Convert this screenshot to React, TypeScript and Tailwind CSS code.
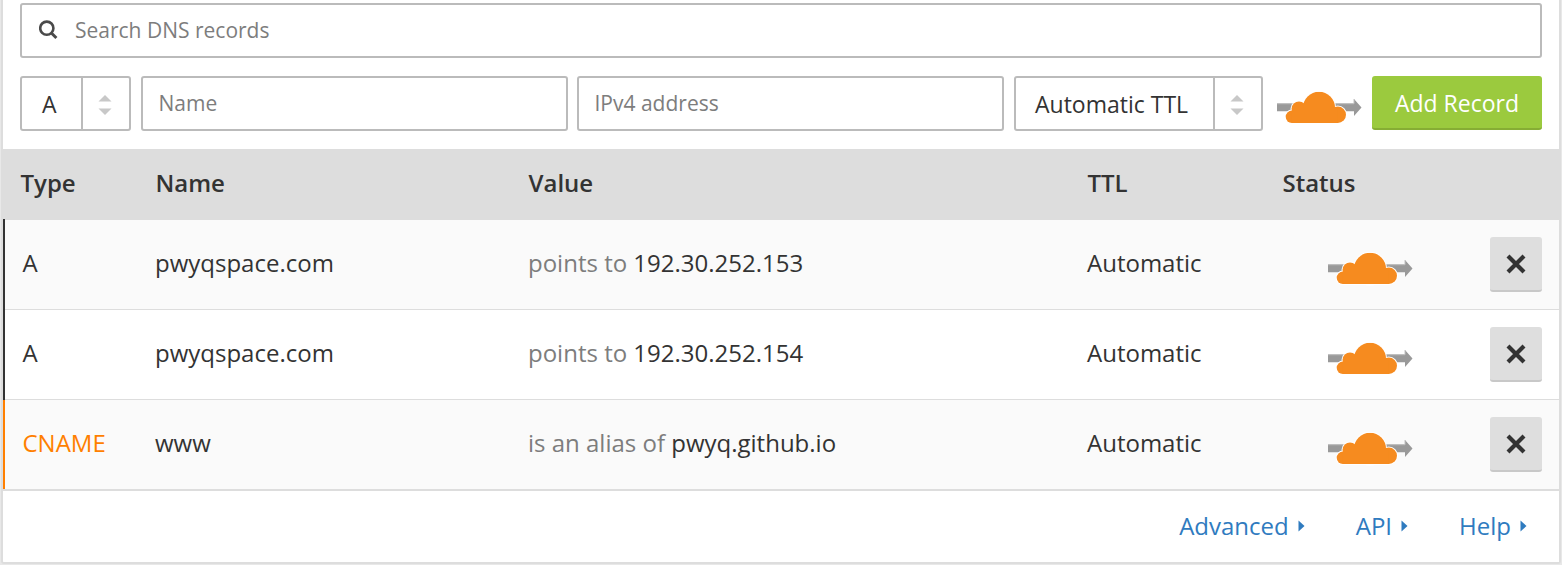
import React from "react";

type DnsRecord = {
  type: "A" | "CNAME";
  name: string;
  verb: string;
  value: string;
  ttl: string;
};

const records: DnsRecord[] = [
  { type: "A", name: "pwyqspace.com", verb: "points to", value: "192.30.252.153", ttl: "Automatic" },
  { type: "A", name: "pwyqspace.com", verb: "points to", value: "192.30.252.154", ttl: "Automatic" },
  { type: "CNAME", name: "www", verb: "is an alias of", value: "pwyq.github.io", ttl: "Automatic" },
];

function CloudShape() {
  return (
    <>
      <circle cx="14.9" cy="25.8" r="6.2" />
      <circle cx="22" cy="17.8" r="7.4" />
      <circle cx="42" cy="16.8" r="16" />
      <circle cx="60.8" cy="23.8" r="8.2" />
      <rect x="14.9" y="17" width="46" height="15" />
    </>
  );
}

function ProxyCloud() {
  return (
    <svg width="86" height="34" viewBox="0 0 86 34" className="block shrink-0">
      <path d="M0 12.2H77V8L84.5 16.4L77 25V20.2H0Z" fill="#999" />
      <path d="M0 12.7H77V8" stroke="#c2c2c2" fill="none" />
      <g fill="#fff" stroke="#fff" strokeWidth="2">
        <CloudShape />
      </g>
      <g fill="#f68b1f">
        <circle cx="14.9" cy="25.8" r="6.2" />
        <circle cx="22" cy="17.8" r="7.4" />
        <circle cx="42" cy="16.8" r="16" clipPath="inset(0 0 2px 0)" />
        <circle cx="60.8" cy="23.8" r="8.2" />
        <rect x="14.9" y="17" width="46" height="15" />
      </g>
    </svg>
  );
}

function Stepper() {
  return (
    <svg width="14" height="20" viewBox="0 0 14 20" fill="#c8c8c8">
      <path d="M7 0L13.5 6.5H0.5Z" />
      <path d="M7 20L13.5 13.5H0.5Z" />
    </svg>
  );
}

function SelectBox({ label, className, labelClass }: { label: string; className: string; labelClass: string }) {
  return (
    <button className={`flex h-[55px] shrink-0 rounded-[3px] border-2 border-[#bbb] bg-white text-left text-[23px] ${className}`}>
      <span className={`h-full flex-1 pt-[3px] leading-[47px] whitespace-nowrap ${labelClass}`}>{label}</span>
      <span className="flex h-full w-[48px] items-center justify-center border-l-2 border-[#bbb] pt-[3px] pr-[3px]">
        <Stepper />
      </span>
    </button>
  );
}

function Field({ placeholder }: { placeholder: string }) {
  return (
    <input
      placeholder={placeholder}
      className="h-[55px] w-[427px] shrink-0 rounded-[3px] border-2 border-[#bbb] bg-white px-[15.5px] pb-[2px] text-[21px] placeholder:text-[#7d7d7d]"
    />
  );
}

function FooterLink({ label, className }: { label: string; className: string }) {
  return (
    <a className={`flex items-center gap-[9px] text-2xl text-[#2f7bbf] ${className}`}>
      {label}
      <svg width="7" height="12" viewBox="0 0 7 12" fill="#2f7bbf">
        <path d="M0.5 0.5L6.5 6L0.5 11.5Z" />
      </svg>
    </a>
  );
}

function Row({ record, striped }: { record: DnsRecord; striped: boolean }) {
  const alias = record.type === "CNAME";
  return (
    <div className="flex h-[90px] text-2xl">
      <div className={alias ? "w-[2px] border-t border-[#333] bg-[#ff7f00]" : "w-[2px] bg-[#333]"} />
      <div className={`flex flex-1 items-center border-t border-[#ddd] ${striped ? "bg-[#fafafa]" : "bg-white"}`}>
        <span className={`w-[150px] pb-[4px] pl-[17.5px] ${alias ? "text-[#ff7f00]" : ""}`}>{record.type}</span>
        <span className="w-[373px] pb-[4px]">{record.name}</span>
        <span className="w-[559px] pb-[4px]">
          <span className="text-[#7d7d7d]">{record.verb}</span> {record.value}
        </span>
        <span className="w-[241px] pb-[4px]">{record.ttl}</span>
        <span className="w-[162px] pt-[9px]">
          <ProxyCloud />
        </span>
        <button className="flex h-[55px] w-[52px] items-center justify-center rounded-[3px] border-b-2 border-[#c8c8c8] bg-[#dedede] pr-px">
          <svg width="20" height="20" viewBox="0 0 20 20" stroke="#333" strokeWidth="4.2">
            <path d="M2 2L18 18M18 2L2 18" />
          </svg>
        </button>
      </div>
    </div>
  );
}

export default function App() {
  return (
    <div className="h-[565px] w-[1562px] overflow-hidden bg-[#e8e8e8] pl-px font-['Open_Sans',sans-serif] text-[#333]">
      <div className="h-[564px] w-[1560px] rounded-b-[3px] border-x-2 border-b-2 border-[#ddd] bg-white">
        <div className="h-[149px] px-[17px] pt-[3px]">
          <div className="flex h-[55px] items-center rounded-[3px] border-2 border-[#bbb] bg-white pl-[17px]">
            <svg width="19" height="20" viewBox="0 0 19 20" fill="none" stroke="#4a4a4a" className="mb-[2px] shrink-0">
              <circle cx="7.8" cy="8.2" r="6.6" strokeWidth="2.6" />
              <path d="M12.4 13L17.4 18" strokeWidth="3" />
            </svg>
            <input
              placeholder="Search DNS records"
              className="h-full flex-1 bg-transparent pb-[2px] pl-[17px] text-[21px] outline-none placeholder:text-[#7d7d7d]"
            />
          </div>
          <div className="mt-[18px] flex">
            <SelectBox label="A" className="w-[111px]" labelClass="pl-[20px]" />
            <div className="ml-[10px] flex gap-[9px]">
              <Field placeholder="Name" />
              <Field placeholder="IPv4 address" />
            </div>
            <SelectBox label="Automatic TTL" className="ml-[10px] w-[249px]" labelClass="pl-[19px]" />
            <div className="ml-[14px] w-[95px] pt-[15px]">
              <ProxyCloud />
            </div>
            <button className="h-[54px] w-[170px] shrink-0 rounded-[3px] border-b-2 border-[#86ad34] bg-[#9bca3e] pt-[2px] text-[23px] text-white">
              Add Record
            </button>
          </div>
        </div>
        <div className="flex h-[70px] items-center bg-[#ddd] pb-[2px] pl-[17.5px] text-2xl font-semibold">
          <span className="w-[135px]">Type</span>
          <span className="w-[373px]">Name</span>
          <span className="w-[559px]">Value</span>
          <span className="w-[195px]">TTL</span>
          <span>Status</span>
        </div>
        {records.map((record, i) => (
          <Row key={record.value} record={record} striped={i % 2 === 0} />
        ))}
        <div className="flex h-[73px] items-center justify-end border-t-2 border-[#ddd] pr-[32px] pb-[2px]">
          <FooterLink label="Advanced" className="mr-[51px]" />
          <FooterLink label="API" className="mr-[51px]" />
          <FooterLink label="Help" className="" />
        </div>
      </div>
    </div>
  );
}
